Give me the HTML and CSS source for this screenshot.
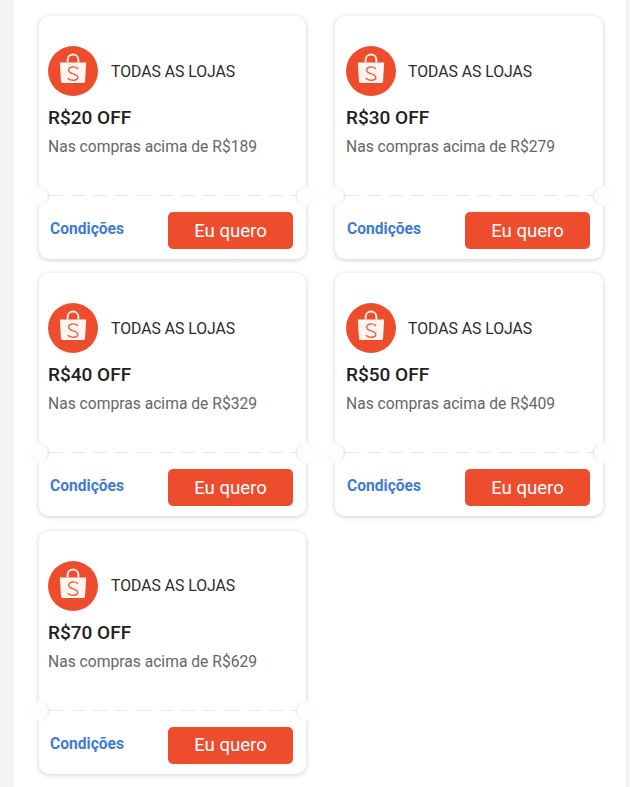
FILE: index.html
```html
<!DOCTYPE html>
<html lang="pt-BR">
<head>
<meta charset="utf-8">
<title>Cupons</title>
<link rel="stylesheet" href="styles.css">
</head>
<body>
<svg class="defs" width="0" height="0" aria-hidden="true">
  <symbol id="shopee" viewBox="0 0 50 50">
    <circle cx="25" cy="25" r="25" fill="#ee4d2d"/>
    <path d="M11.8 16.5H38.2L37 35.4Q36.9 37 35.2 37H14.8Q13.1 37 13 35.4Z" fill="#fff6f2"/>
    <path d="M19.6 16.5V13.8C19.6 6.8 30.4 6.8 30.4 13.8V16.5" fill="none" stroke="#fff6f2" stroke-width="1.9"/>
    <path d="M29.6 22.4C27.4 20.2 20.8 20.2 20.7 24.2C20.6 28.4 30 27.4 29.8 31.4C29.6 35.2 22.8 35 20.2 32.4" fill="none" stroke="#ee5c3c" stroke-width="1.4" stroke-linecap="round"/>
  </symbol>
</svg>
<main class="panel">
  <article class="card">
    <div class="top">
      <div class="store"><svg class="logo"><use href="#shopee"/></svg><span>TODAS AS LOJAS</span></div>
      <h2 class="amount">R$20 OFF</h2>
      <p class="rule">Nas compras acima de R$189</p>
    </div>
    <div class="bottom"><a class="terms">Condições</a><button class="cta">Eu quero</button></div>
  </article>
  <article class="card card-right">
    <div class="top">
      <div class="store"><svg class="logo"><use href="#shopee"/></svg><span>TODAS AS LOJAS</span></div>
      <h2 class="amount">R$30 OFF</h2>
      <p class="rule">Nas compras acima de R$279</p>
    </div>
    <div class="bottom"><a class="terms">Condições</a><button class="cta">Eu quero</button></div>
  </article>
  <article class="card">
    <div class="top">
      <div class="store"><svg class="logo"><use href="#shopee"/></svg><span>TODAS AS LOJAS</span></div>
      <h2 class="amount">R$40 OFF</h2>
      <p class="rule">Nas compras acima de R$329</p>
    </div>
    <div class="bottom"><a class="terms">Condições</a><button class="cta">Eu quero</button></div>
  </article>
  <article class="card card-right">
    <div class="top">
      <div class="store"><svg class="logo"><use href="#shopee"/></svg><span>TODAS AS LOJAS</span></div>
      <h2 class="amount">R$50 OFF</h2>
      <p class="rule">Nas compras acima de R$409</p>
    </div>
    <div class="bottom"><a class="terms">Condições</a><button class="cta">Eu quero</button></div>
  </article>
  <article class="card">
    <div class="top">
      <div class="store"><svg class="logo"><use href="#shopee"/></svg><span>TODAS AS LOJAS</span></div>
      <h2 class="amount">R$70 OFF</h2>
      <p class="rule">Nas compras acima de R$629</p>
    </div>
    <div class="bottom"><a class="terms">Condições</a><button class="cta">Eu quero</button></div>
  </article>
</main>
</body>
</html>
```
FILE: styles.css
```css
html, body { margin: 0; height: 100%; }
body {
  background: #f4f4f4;
  font-family: Roboto, "Liberation Sans", sans-serif;
  overflow: hidden;
}
.defs { position: absolute; }
.panel {
  margin-left: 14px;
  width: 611px;
  min-height: 787px;
  box-sizing: border-box;
  background: #fff;
  padding: 16px 22px 0 25px;
  display: grid;
  grid-template-columns: 267px 268px;
  grid-auto-rows: 243px;
  column-gap: 29px;
  row-gap: 14.25px;
  align-content: start;
}
.card {
  position: relative;
  display: flex;
  flex-direction: column;
  background: #fff;
  border-radius: 10px;
  box-shadow: 0 1px 5px rgba(0, 0, 0, 0.2);
}
.card::before, .card::after {
  content: "";
  position: absolute;
  top: 170px;
  width: 20px;
  height: 20px;
  border-radius: 50%;
  background: #fdfdfd;
}
.card::before { left: -11px; box-shadow: 2px 0 2px -1px rgba(0, 0, 0, 0.12); }
.card::after { right: -11px; box-shadow: -2px 0 2px -1px rgba(0, 0, 0, 0.12); }
.top {
  height: 180px;
  box-sizing: border-box;
  padding: 30px 9px 0;
  background: repeating-linear-gradient(90deg, #e8e8e8 0 14px, transparent 14px 22px) left 10px bottom / calc(100% - 20px) 1px no-repeat;
}
.card-right .top { padding-left: 11px; }
.store {
  display: flex;
  align-items: center;
  gap: 13px;
  font-size: 15.75px;
  color: #2b2b2b;
}
.card-right .store { gap: 12px; }
.logo { width: 50px; height: 50px; flex: none; }
.amount {
  margin: 10px 0 0;
  font-size: 19px;
  line-height: 24px;
  font-weight: 500;
  color: #212121;
}
.rule {
  margin: 7px 0 0;
  font-size: 15.65px;
  line-height: 20px;
  color: #666;
}
.bottom {
  flex: 1;
  display: flex;
  align-items: center;
  justify-content: space-between;
  padding: 6px 13px 0 11px;
}
.card-right .bottom { padding-left: 12px; }
.terms {
  font-size: 15.6px;
  font-weight: 700;
  color: #3f7ad6;
  margin-top: -3px;
}
.cta {
  width: 125px;
  height: 37px;
  border: 0;
  border-radius: 5px;
  background: #ee4d2d;
  color: #fff;
  font: 400 18.6px Roboto, "Liberation Sans", sans-serif;
}
```
